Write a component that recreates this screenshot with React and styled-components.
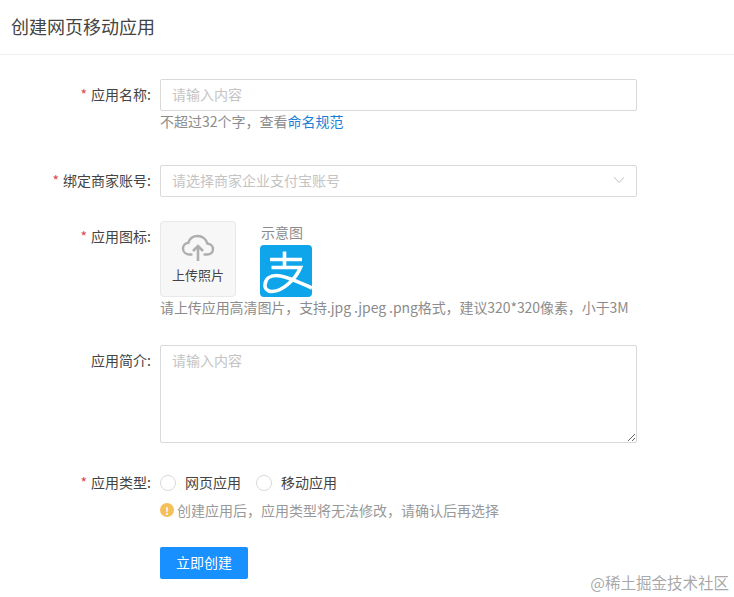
import React from "react";
import styled, { createGlobalStyle } from "styled-components";

const GlobalStyle = createGlobalStyle`
  html, body {
    margin: 0;
    padding: 0;
    background: #fff;
  }
  body {
    font-family: "Noto Sans CJK SC", "Liberation Sans", sans-serif;
    font-size: 14px;
    color: #444;
  }
  * {
    box-sizing: border-box;
  }
`;

function Row({ label, required, offset, children }) {
  return (
    <FormRow $offset={offset}>
      <Label>
        {required && <Star>*</Star>}
        {label}:
      </Label>
      <Control>{children}</Control>
    </FormRow>
  );
}

function App() {
  return (
    <Page>
      <GlobalStyle />
      <Header>创建网页移动应用</Header>
      <Form>
        <Row label="应用名称" required offset={24}>
          <Input placeholder="请输入内容" />
          <Help>
            不超过32个字，查看<HelpLink>命名规范</HelpLink>
          </Help>
        </Row>

        <Row label="绑定商家账号" required offset={32}>
          <Select>
            <Placeholder>请选择商家企业支付宝账号</Placeholder>
            <svg width="12" height="8" viewBox="0 0 12 8" fill="none">
              <path d="M1 1.2 L6 6.4 L11 1.2" stroke="#bfbfbf" strokeWidth="1" />
            </svg>
          </Select>
        </Row>

        <Row label="应用图标" required offset={24}>
          <IconRow>
            <Upload>
              <svg width="34" height="28" viewBox="0 0 34 28" fill="none">
                <path
                  d="M10.5 20.5 H8.5 C4.6 20.5 2 17.8 2 14.5 C2 11.4 4.3 9 7.4 8.7 C8.6 4.6 12.3 2 16.6 2 C21.4 2 25.4 5.3 26.2 9.5 C29.6 9.8 32 12.2 32 15.2 C32 18.3 29.5 20.5 26 20.5 H23.5"
                  stroke="#aeaeae"
                  strokeWidth="2.4"
                  strokeLinecap="round"
                />
                <path d="M17 27 V12.5 M12 17 L17 12 L22 17" stroke="#aeaeae" strokeWidth="2.6" />
              </svg>
              <UploadText>上传照片</UploadText>
            </Upload>
            <Sample>
              <SampleTitle>示意图</SampleTitle>
              <svg width="52" height="52" viewBox="0 0 52 52">
                <rect width="52" height="52" rx="4" fill="#0ea5ea" />
                <path
                  d="M10 14.5 H42 M24.5 6.5 V22 M11.5 22.5 H40.5 C36 33 24 46 12 46.5 C7 46.8 4.5 43 5 39.5 C5.5 34 10 30.5 16 30.5 C26 30.5 38 37 52 43"
                  fill="none"
                  stroke="#fff"
                  strokeWidth="3.6"
                />
              </svg>
            </Sample>
          </IconRow>
          <IconHelp>请上传应用高清图片，支持.jpg .jpeg .png格式，建议320*320像素，小于3M</IconHelp>
        </Row>

        <Row label="应用简介" offset={26}>
          <TextArea placeholder="请输入内容" />
        </Row>

        <Row label="应用类型" required offset={24}>
          <RadioGroup>
            <RadioOption>
              <RadioCircle />
              <RadioText>网页应用</RadioText>
            </RadioOption>
            <RadioOption>
              <RadioCircle />
              <RadioText>移动应用</RadioText>
            </RadioOption>
          </RadioGroup>
          <Warning>
            <WarningDot>!</WarningDot>
            创建应用后，应用类型将无法修改，请确认后再选择
          </Warning>
        </Row>

        <Actions>
          <SubmitButton type="button">立即创建</SubmitButton>
        </Actions>
      </Form>
      <Watermark>@稀土掘金技术社区</Watermark>
    </Page>
  );
}

const Page = styled.div`
  position: relative;
  width: 734px;
  height: 597px;
  overflow: hidden;
`;

const Header = styled.div`
  height: 55px;
  padding-left: 11px;
  border-bottom: 1px solid #eee;
  font-size: 18px;
  line-height: 53px;
  color: #444;
`;

const Form = styled.div`
  display: flex;
  flex-direction: column;
`;

const FormRow = styled.div`
  display: flex;
  margin-top: ${(p) => p.$offset}px;
`;

const Label = styled.div`
  width: 151px;
  height: 32px;
  margin-right: 9px;
  text-align: right;
  line-height: 30px;
  color: #444;
`;

const Star = styled.span`
  margin-right: 4px;
  color: #e0484a;
`;

const Control = styled.div`
  display: flex;
  flex-direction: column;
  width: 477px;
`;

const Input = styled.input`
  width: 100%;
  height: 32px;
  padding: 0 11px 2px;
  border: 1px solid #d9d9d9;
  border-radius: 2px;
  outline: none;
  font-family: inherit;
  font-size: 14px;
  &::placeholder {
    color: #c4c4c4;
  }
`;

const Help = styled.div`
  height: 22px;
  line-height: 21px;
  color: #8c8c8c;
`;

const HelpLink = styled.span`
  color: #1e7fd6;
`;

const Select = styled.div`
  display: flex;
  align-items: center;
  justify-content: space-between;
  height: 32px;
  padding: 0 11px 2px 11px;
  border: 1px solid #d9d9d9;
  border-radius: 2px;
`;

const Placeholder = styled.span`
  color: #c4c4c4;
`;

const IconRow = styled.div`
  display: flex;
  height: 76px;
`;

const Upload = styled.div`
  display: flex;
  flex-direction: column;
  align-items: center;
  width: 76px;
  height: 76px;
  padding-top: 12px;
  background: #f7f7f7;
  border: 1px solid #e8e8e8;
  border-radius: 4px;
`;

const UploadText = styled.div`
  margin-top: 2px;
  font-size: 13px;
  line-height: 22px;
  color: #444;
`;

const Sample = styled.div`
  display: flex;
  flex-direction: column;
  margin-left: 24px;
`;

const SampleTitle = styled.div`
  height: 24px;
  padding-left: 1px;
  line-height: 22px;
  color: #8c8c8c;
`;

const IconHelp = styled.div`
  height: 22px;
  line-height: 21px;
  letter-spacing: -0.08px;
  white-space: nowrap;
  color: #8c8c8c;
`;

const TextArea = styled.textarea`
  display: block;
  width: 100%;
  height: 98px;
  padding: 4px 11px;
  border: 1px solid #d9d9d9;
  border-radius: 2px;
  outline: none;
  font-family: inherit;
  font-size: 14px;
  line-height: 20px;
  &::placeholder {
    color: #c4c4c4;
  }
`;

const RadioGroup = styled.div`
  display: flex;
  align-items: center;
  gap: 15px;
  height: 32px;
`;

const RadioOption = styled.label`
  display: flex;
  align-items: center;
  gap: 9px;
  color: #444;
`;

const RadioText = styled.span`
  line-height: 30px;
  padding-bottom: 2px;
`;

const RadioCircle = styled.span`
  width: 16px;
  height: 16px;
  border: 1px solid #d9d9d9;
  border-radius: 50%;
  background: #fff;
`;

const Warning = styled.div`
  display: flex;
  align-items: center;
  gap: 3px;
  height: 22px;
  color: #999;
`;

const WarningDot = styled.span`
  display: flex;
  align-items: center;
  justify-content: center;
  width: 14px;
  height: 14px;
  border-radius: 50%;
  background: #f5bf5a;
  font-size: 10px;
  font-weight: 700;
  color: #fff;
`;

const Actions = styled.div`
  margin-top: 26px;
  padding-left: 160px;
`;

const SubmitButton = styled.button`
  width: 88px;
  height: 32px;
  padding: 0 0 2px;
  border: 0;
  border-radius: 2px;
  background: #1890ff;
  font-family: inherit;
  font-size: 14px;
  color: #fff;
`;

const Watermark = styled.div`
  position: absolute;
  right: 5px;
  bottom: 5px;
  font-size: 15.5px;
  line-height: 20px;
  color: rgba(130, 130, 130, 0.7);
`;

export default App;
